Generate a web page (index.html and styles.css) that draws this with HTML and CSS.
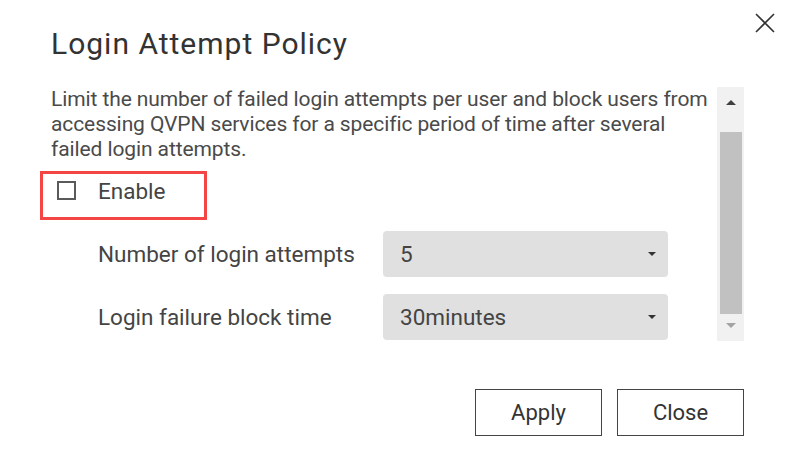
FILE: index.html
```html
<!DOCTYPE html>
<html lang="en">
<head>
<meta charset="utf-8">
<title>Login Attempt Policy</title>
<link rel="stylesheet" href="styles.css">
</head>
<body>
<div class="dialog">
  <button class="close-x" aria-label="Close">
    <svg width="20" height="20" viewBox="0 0 20 20"><path d="M1 1 L19 19 M19 1 L1 19" stroke="#333" stroke-width="1.6" fill="none"/></svg>
  </button>
  <h1 class="title">Login Attempt Policy</h1>
  <div class="content">
    <div class="body">
      <p class="desc">Limit the number of failed login attempts per user and block users from accessing QVPN services for a specific period of time after several failed login attempts.</p>
      <label class="enable">
        <span class="checkbox"></span>
        <span class="enable-text">Enable</span>
      </label>
      <div class="field">
        <span class="field-label">Number of login attempts</span>
        <div class="select"><span>5</span><span class="caret"></span></div>
      </div>
      <div class="field">
        <span class="field-label">Login failure block time</span>
        <div class="select"><span>30minutes</span><span class="caret"></span></div>
      </div>
    </div>
    <div class="scrollbar">
      <div class="sb-btn"><span class="arrow-up"></span></div>
      <div class="sb-thumb"></div>
      <div class="sb-btn bottom"><span class="arrow-down"></span></div>
    </div>
  </div>
  <div class="footer">
    <button class="btn">Apply</button>
    <button class="btn">Close</button>
  </div>
</div>
</body>
</html>
```
FILE: styles.css
```css
* { box-sizing: border-box; }
html, body { margin: 0; padding: 0; background: #fff; }
body {
  font-family: Roboto, "Noto Sans", "Liberation Sans", sans-serif;
  color: #333;
  width: 800px;
  height: 468px;
  overflow: hidden;
}
.dialog {
  position: relative;
  padding: 24px 56px 0 51px;
}
.close-x {
  position: absolute;
  top: 13px;
  left: 755px;
  width: 20px;
  height: 20px;
  padding: 0;
  border: 0;
  background: none;
  display: block;
}
.close-x svg { display: block; }
.title {
  margin: 0;
  font-size: 30px;
  letter-spacing: 1px;
  font-weight: 400;
  line-height: 40px;
  color: #333;
}
.content {
  display: flex;
  margin-top: 23px;
  height: 254px;
}
.body {
  width: 666px;
}
.desc {
  margin: 0;
  font-size: 21px;
  letter-spacing: -0.1px;
  line-height: 25px;
  color: #4a4a4a;
}
.enable {
  display: flex;
  align-items: center;
  width: 167px;
  height: 49px;
  margin: 9px 0 0 -11px;
  border: 3px solid #f44545;
  padding: 0 0 10px 14px;
}
.checkbox {
  width: 19px;
  height: 19px;
  border: 2px solid #5a5a5a;
  background: #fff;
}
.enable-text {
  margin-left: 22px;
  font-size: 22.5px;
  color: #444;
}
.field {
  display: flex;
  align-items: center;
  margin-top: 11px;
  padding-left: 47px;
}
.field + .field { margin-top: 17px; }
.field-label {
  width: 285px;
  font-size: 22.5px;
  color: #444;
}
.select {
  width: 285px;
  height: 46px;
  background: #e0e0e0;
  border-radius: 4px;
  display: flex;
  align-items: center;
  justify-content: space-between;
  padding: 0 12px 0 17px;
  font-size: 22.5px;
  color: #444;
}
.caret {
  width: 0;
  height: 0;
  border-left: 4px solid transparent;
  border-right: 4px solid transparent;
  border-top: 4px solid #333;
}
.scrollbar {
  width: 27px;
  background: #f1f1f1;
  display: flex;
  flex-direction: column;
}
.sb-btn {
  height: 45px;
  display: flex;
  justify-content: center;
  padding-top: 13px;
}
.sb-btn.bottom {
  height: 27px;
  padding-top: 9px;
}
.arrow-up {
  width: 0; height: 0;
  border-left: 5px solid transparent;
  border-right: 5px solid transparent;
  border-bottom: 5px solid #404040;
}
.arrow-down {
  width: 0; height: 0;
  border-left: 5px solid transparent;
  border-right: 5px solid transparent;
  border-top: 5px solid #a3a3a3;
}
.sb-thumb {
  flex: 1;
  margin: 0 2px 0 3px;
  background: #c1c1c1;
}
.footer {
  display: flex;
  justify-content: flex-end;
  gap: 15px;
  margin-top: 48px;
}
.btn {
  width: 127px;
  height: 47px;
  background: #fff;
  border: 1.5px solid #444;
  border-radius: 0;
  font-family: Roboto, "Noto Sans", "Liberation Sans", sans-serif;
  font-size: 22px;
  color: #333;
  padding: 0;
}
```
